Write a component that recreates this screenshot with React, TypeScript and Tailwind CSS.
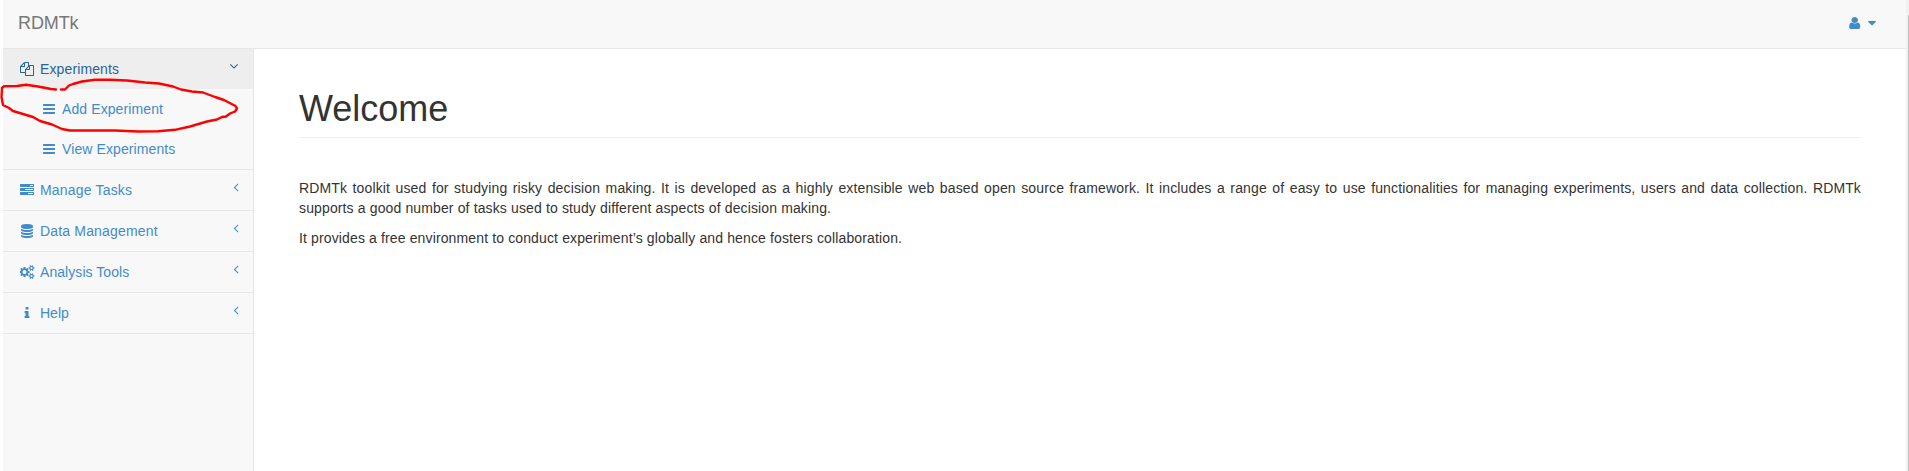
import type { ReactNode } from 'react';

const paths = {
  files:
    'M1696 384q40 0 68 28t28 68v1216q0 40-28 68t-68 28h-960q-40 0-68-28t-28-68v-288h-544q-40 0-68-28t-28-68v-672q0-40 20-88t48-76l408-408q28-28 76-48t88-20h416q40 0 68 28t28 68v328q68-40 128-40h416zm-544 213l-299 299h299v-299zm-640-384l-299 299h299v-299zm196 647l316-316v-416h-384v416q0 40-28 68t-68 28h-416v640h512v-256q0-40 20-88t48-76zm956 804v-1152h-384v416q0 40-28 68t-68 28h-416v640h896z',
  bars: 'M1664 1344v128q0 26-19 45t-45 19h-1408q-26 0-45-19t-19-45v-128q0-26 19-45t45-19h1408q26 0 45 19t19 45zm0-512v128q0 26-19 45t-45 19h-1408q-26 0-45-19t-19-45v-128q0-26 19-45t45-19h1408q26 0 45 19t19 45zm0-512v128q0 26-19 45t-45 19h-1408q-26 0-45-19t-19-45v-128q0-26 19-45t45-19h1408q26 0 45 19t19 45z',
  tasks:
    'M1024 1408h640v-128h-640v128zm-384-512h1024v-128h-1024v128zm640-512h384v-128h-384v128zm512 832v256q0 26-19 45t-45 19h-1664q-26 0-45-19t-19-45v-256q0-26 19-45t45-19h1664q26 0 45 19t19 45zm0-512v256q0 26-19 45t-45 19h-1664q-26 0-45-19t-19-45v-256q0-26 19-45t45-19h1664q26 0 45 19t19 45zm0-512v256q0 26-19 45t-45 19h-1664q-26 0-45-19t-19-45v-256q0-26 19-45t45-19h1664q26 0 45 19t19 45z',
  database:
    'M896 768q237 0 443-43t325-127v170q0 69-103 128t-280 93.5-385 34.5-385-34.5-280-93.5-103-128v-170q119 84 325 127t443 43zm0 768q237 0 443-43t325-127v170q0 69-103 128t-280 93.5-385 34.5-385-34.5-280-93.5-103-128v-170q119 84 325 127t443 43zm0-384q237 0 443-43t325-127v170q0 69-103 128t-280 93.5-385 34.5-385-34.5-280-93.5-103-128v-170q119 84 325 127t443 43zm0-1152q208 0 385 34.5t280 93.5 103 128v128q0 69-103 128t-280 93.5-385 34.5-385-34.5-280-93.5-103-128v-128q0-69 103-128t280-93.5 385-34.5z',
  cogs: 'M832 896q0-106-75-181t-181-75-181 75-75 181 75 181 181 75 181-75 75-181zm768 512q0-52-38-90t-90-38-90 38-38 90q0 53 37.500 90.500t90.500 37.500 90.500-37.500 37.500-90.500zm0-1024q0-52-38-90t-90-38-90 38-38 90q0 53 37.500 90.500t90.500 37.500 90.500-37.500 37.500-90.500zm-384 421v185q0 10-7 19.500t-16 10.500l-155 24q-11 35-32 76 34 48 90 115 7 11 7 20 0 12-7 19-23 30-82.500 89.500t-78.500 59.500q-11 0-21-7l-115-90q-37 19-77 31-11 108-23 155-7 24-30 24h-186q-11 0-20-7.500t-10-17.500l-23-153q-34-10-75-31l-118 89q-7 7-20 7-11 0-21-8-144-133-144-160 0-9 7-19 10-14 41-53t47-61q-23-44-35-82l-152-24q-10-1-17-9.500t-7-19.500v-185q0-10 7-19.500t16-10.500l155-24q11-35 32-76-34-48-90-115-7-11-7-20 0-12 7-20 22-30 82-89t79-59q11 0 21 7l115 90q34-18 77-32 11-108 23-154 7-24 30-24h186q11 0 20 7.500t10 17.500l23 153q34 10 75 31l118-89q8-7 20-7 11 0 21 8 144 133 144 160 0 8-7 19-12 16-42 54t-45 60q23 48 34 82l152 23q10 2 17 10.500t7 19.500zm640 533v140q0 16-149 31-12 27-30 52 51 113 51 138 0 4-4 7-122 71-124 71-8 0-46-47t-52-68q-20 2-30 2t-30-2q-14 21-52 68t-46 47q-2 0-124-71-4-3-4-7 0-25 51-138-18-25-30-52-149-15-149-31v-140q0-16 149-31 13-29 30-52-51-113-51-138 0-4 4-7 4-2 35-20t59-34 30-16q8 0 46 46.500t52 67.500q20-2 30-2t30 2q51-71 92-112l6-2q4 0 124 70 4 3 4 7 0 25-51 138 17 23 30 52 149 15 149 31zm0-1024v140q0 16-149 31-12 27-30 52 51 113 51 138 0 4-4 7-122 71-124 71-8 0-46-47t-52-68q-20 2-30 2t-30-2q-14 21-52 68t-46 47q-2 0-124-71-4-3-4-7 0-25 51-138-18-25-30-52-149-15-149-31v-140q0-16 149-31 13-29 30-52-51-113-51-138 0-4 4-7 4-2 35-20t59-34 30-16q8 0 46 46.500t52 67.500q20-2 30-2t30 2q51-71 92-112l6-2q4 0 124 70 4 3 4 7 0 25-51 138 17 23 30 52 149 15 149 31z',
  info: 'M1216 1344v128q0 26-19 45t-45 19h-512q-26 0-45-19t-19-45v-128q0-26 19-45t45-19h64v-384h-64q-26 0-45-19t-19-45v-128q0-26 19-45t45-19h384q26 0 45 19t19 45v576h64q26 0 45 19t19 45zm-128-1152v192q0 26-19 45t-45 19h-256q-26 0-45-19t-19-45v-192q0-26 19-45t45-19h256q26 0 45 19t19 45z',
  user: 'M1536 1399q0 109-62.500 187t-150.500 78h-854q-88 0-150.500-78t-62.500-187q0-85 8.500-160.500t31.500-152 58.500-131 94-89 134.500-34.500q131 128 313 128t313-128q76 0 134.500 34.500t94 89 58.500 131 31.500 152 8.500 160.500zm-256-887q0 159-112.500 271.500t-271.500 112.500-271.500-112.500-112.500-271.500 112.500-271.500 271.500-112.500 271.500 112.500 112.500 271.500z',
  caret: 'M1408 704q0 26-19 45l-448 448q-19 19-45 19t-45-19l-448-448q-19-19-19-45t19-45 45-19h896q26 0 45 19t19 45z',
  down: 'M1395 736q0 13-10 23l-466 466q-10 10-23 10t-23-10l-466-466q-10-10-10-23t10-23l50-50q10-10 23-10t23 10l393 393 393-393q10-10 23-10t23 10l50 50q10 10 10 23z',
  left: 'M1203 544q0 13-10 23l-393 393 393 393q10 10 10 23t-10 23l-50 50q-10 10-23 10t-23-10l-466-466q-10-10-10-23t10-23l466-466q10-10 23-10t23 10l50 50q10 10 10 23z',
};

type IconName = keyof typeof paths;

function Icon({ name, className = 'w-3.5' }: { name: IconName; className?: string }) {
  return (
    <svg
      viewBox={name === 'cogs' ? '0 0 1920 1792' : '0 0 1792 1792'}
      preserveAspectRatio="none"
      className={`h-3.5 shrink-0 fill-current ${className}`}
      aria-hidden="true"
    >
      <path d={paths[name]} />
    </svg>
  );
}

function NavLink({ icon, tracking, children }: { icon: IconName; tracking: string; children: ReactNode }) {
  return (
    <a href="#" className={`flex h-10 items-center gap-1 ${tracking}`}>
      <span className="flex w-[18px] justify-center">
        <Icon name={icon} className={icon === 'cogs' ? 'w-[15px]' : 'w-3.5'} />
      </span>
      {children}
    </a>
  );
}

const sections: { icon: IconName; label: string; tracking: string }[] = [
  { icon: 'tasks', label: 'Manage Tasks', tracking: 'tracking-[0.18px]' },
  { icon: 'database', label: 'Data Management', tracking: 'tracking-[0.17px]' },
  { icon: 'cogs', label: 'Analysis Tools', tracking: 'tracking-[0.06px]' },
  { icon: 'info', label: 'Help', tracking: 'tracking-normal' },
];

export default function App() {
  return (
    <div className="relative flex h-[471px] overflow-hidden bg-white pl-[3px] font-['Liberation_Sans',Arial,sans-serif] text-sm leading-5 text-[#333]">
      <div className="flex min-w-0 flex-1 flex-col">
        <header className="flex h-[49px] shrink-0 items-center justify-between border-b border-[#e7e7e7] bg-[#f8f8f8] pr-[27px] pl-[15px]">
          <a href="#" className="pb-0.5 text-lg leading-5 tracking-[-0.1px] text-[#777]">
            RDMTk
          </a>
          <a href="#" className="flex items-center gap-[3px] pb-0.5 text-[#428bca]">
            <Icon name="user" className="w-[15.4px]" />
            <Icon name="caret" />
          </a>
        </header>
        <div className="flex min-h-0 flex-1">
          <nav className="w-[251px] shrink-0 border-r border-[#e7e7e7] bg-[#f8f8f8] text-[#428bca]">
            <div className="border-b border-[#e7e7e7]">
              <div className="flex justify-between bg-[#eee] pr-3 pl-[15px] text-[#2a6496]">
                <NavLink icon="files" tracking="tracking-[0.12px]">
                  Experiments
                </NavLink>
                <Icon name="down" className="mt-2.5 w-3.5" />
              </div>
              <div className="pl-[37px]">
                <NavLink icon="bars" tracking="tracking-[0.1px]">
                  Add Experiment
                </NavLink>
                <NavLink icon="bars" tracking="tracking-[0.1px]">
                  View Experiments
                </NavLink>
              </div>
            </div>
            {sections.map((s) => (
              <div key={s.label} className="flex justify-between border-b border-[#e7e7e7] pr-2.5 pl-[15px]">
                <NavLink icon={s.icon} tracking={s.tracking}>
                  {s.label}
                </NavLink>
                <Icon name="left" className="mt-2.5 w-3.5" />
              </div>
            ))}
          </nav>
          <main className="min-w-0 flex-1 pt-10 pr-[45px] pl-[45px]">
            <h1 className="border-b border-[#eee] pb-[9px] text-4xl leading-[39px] font-normal">Welcome</h1>
            <p className="mt-10 text-justify tracking-[0.132px]">
              RDMTk toolkit used for studying risky decision making. It is developed as a highly extensible web based
              open source framework. It includes a range of easy to use functionalities for managing experiments, users
              and data collection. RDMTk supports a good number of tasks used to study different aspects of decision
              making.
            </p>
            <p className="mt-2.5 tracking-[0.132px]">
              It provides a free environment to conduct experiment’s globally and hence fosters collaboration.
            </p>
          </main>
        </div>
      </div>
      <div className="w-[3px] shrink-0 bg-[#f1f1f1] pt-[15px] pl-0.5">
        <div className="h-full bg-[#c1c1c1]" />
      </div>
      <svg
        viewBox="0 0 250 140"
        className="pointer-events-none absolute top-0 left-0 h-[140px] w-[250px] fill-none stroke-[#f00] stroke-[2.4]"
        strokeLinecap="round"
        strokeLinejoin="round"
        aria-hidden="true"
      >
        <path d="M56 89.500L51 89L38 86.500L26 84.700L17 86L4 86.200L2 88L1.500 97L3 105L9 108L13 111L33 117L40 121L52 124.500L62 129L70 130.500H115L138 131.500L158 131.300L175 129.800L190 126.500L207 121.500L217 119.500L222 117L226 116.500L230 113.500L235 111.500L237 108.500L235.500 106L224 100L215 97L203 92.500L192 91.500L181 89.500L173 86.500L159 83.500L145 82.500L127 80.500L110 79.700H95L82 81.500L73 84L69 85.500L65 89.500H61" />
      </svg>
    </div>
  );
}
